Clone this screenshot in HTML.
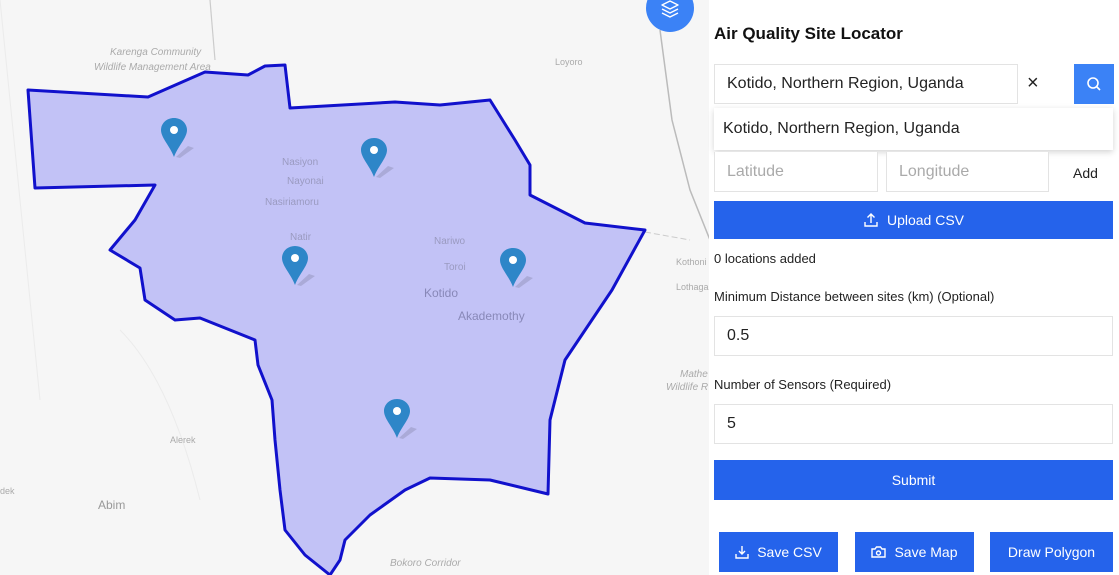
<!DOCTYPE html>
<html><head><style>
*{box-sizing:border-box;margin:0;padding:0}
body{width:1119px;height:575px;overflow:hidden;background:#f6f6f6;font-family:"Liberation Sans",Arial,sans-serif;position:relative}
.map{position:absolute;left:0;top:0;width:1119px;height:575px}
.panel{position:absolute;left:709px;top:0;width:410px;height:575px;background:#fff}
.a{position:absolute}
.inp{position:absolute;border:1px solid #e3e3e3;background:#fff;font-size:16px;color:#222;padding-left:12px;display:flex;align-items:center}
.btn{position:absolute;background:#2563eb;color:#fff;font-size:14px;display:flex;align-items:center;justify-content:center;gap:8px}
.lbl{position:absolute;font-size:14px;color:#222}
</style></head><body>
<svg class="map" viewBox="0 0 1119 575">
<rect width="1119" height="575" fill="#f6f6f6"/>
<path d="M0 0 L40 400 M120 330 Q170 380 200 500" fill="none" stroke="#ebebeb" stroke-width="1"/>
<path d="M660 30 L672 120 L690 190 L710 240" fill="none" stroke="#bbb" stroke-width="1.5"/>
<path d="M645 232 L690 240" fill="none" stroke="#ccc" stroke-width="1" stroke-dasharray="6 3"/>
<path d="M210 0 L215 60" fill="none" stroke="#ccc" stroke-width="1.2"/>
<path d="M28 90 L148 97 L205 72 L248 75 L265 66 L285 65 L290 108 L395 102 L440 105 L490 100 L515 140 L530 165 L530 195 L585 223 L645 230 L612 290 L565 360 L550 420 L548 494 L490 480 L430 478 L405 490 L370 515 L345 540 L340 560 L330 575 L305 555 L285 530 L280 490 L275 440 L272 400 L258 365 L255 340 L200 318 L175 320 L145 300 L140 268 L110 250 L135 220 L155 185 L35 188 Z" fill="#c2c2f6" stroke="#1111cc" stroke-width="3" stroke-linejoin="round"/>
<g font-size="10" fill="#9a9ac0">
<text x="282" y="165">Nasiyon</text><text x="287" y="184">Nayonai</text><text x="265" y="205">Nasiriamoru</text>
<text x="290" y="240">Natir</text><text x="434" y="244">Nariwo</text><text x="444" y="270">Toroi</text>
</g>
<text x="424" y="297" font-size="12" fill="#8888b8">Kotido</text>
<text x="458" y="320" font-size="12" fill="#8888b8">Akademothy</text>
<g font-size="10" fill="#aaa" font-style="italic">
<text x="110" y="55">Karenga Community</text><text x="94" y="70">Wildlife Management Area</text>
<text x="390" y="566">Bokoro Corridor</text><text x="680" y="377">Mathe</text><text x="666" y="390">Wildlife R</text>
</g>
<g font-size="9" fill="#aaa"><text x="555" y="65">Loyoro</text><text x="170" y="443">Alerek</text><text x="676" y="265">Kothoni</text><text x="676" y="290">Lothaga</text><text x="0" y="494">dek</text></g>
<text x="98" y="509" font-size="12" fill="#999">Abim</text>
<defs><g id="pin"><path d="M2 39 L14 28 L20 30 L6 40Z" fill="rgba(0,0,0,.12)"/><path d="M0 0 C-8 0 -13 6 -13 12 C-13 20 -4 28 0 39 C4 28 13 20 13 12 C13 6 8 0 0 0Z" fill="#2e86c8"/><circle cx="0" cy="12" r="4" fill="#fff"/></g></defs>
<use href="#pin" transform="translate(174,118)"/>
<use href="#pin" transform="translate(374,138)"/>
<use href="#pin" transform="translate(295,246)"/>
<use href="#pin" transform="translate(513,248)"/>
<use href="#pin" transform="translate(397,399)"/>
<circle cx="670" cy="8" r="24" fill="#3b82f6"/>
<path d="M670 1 L678 5 L670 9 L662 5Z M662 9 L670 13 L678 9 M662 13 L670 17 L678 13" fill="none" stroke="#fff" stroke-width="1.4" stroke-linejoin="round"/>
</svg>
<div class="panel">
<div class="a" style="left:5px;top:24px;font-size:17px;font-weight:bold;color:#111">Air Quality Site Locator</div>
<div class="inp" style="left:5px;top:64px;width:304px;height:40px">Kotido, Northern Region, Uganda</div>
<div class="a" style="left:318px;top:72px;font-size:20px;color:#222">×</div>
<div class="btn" style="left:365px;top:64px;width:40px;height:40px;background:#3b82f6"><svg width="16" height="16" viewBox="0 0 16 16"><circle cx="7" cy="7" r="5" fill="none" stroke="#fff" stroke-width="1.6"/><path d="M11 11 L14 14" stroke="#fff" stroke-width="1.6"/></svg></div>
<div class="a" style="left:5px;top:108px;width:399px;height:42px;background:#fff;box-shadow:0 2px 6px rgba(0,0,0,.18);font-size:16px;color:#222;padding:12px 0 0 9px">Kotido, Northern Region, Uganda</div>
<div class="inp" style="left:5px;top:152px;width:164px;height:40px;color:#aaa;border-top:none">Latitude</div>
<div class="inp" style="left:177px;top:152px;width:163px;height:40px;color:#aaa;border-top:none">Longitude</div>
<div class="a" style="left:364px;top:165px;font-size:14px;color:#222">Add</div>
<div class="btn" style="left:5px;top:201px;width:399px;height:38px"><svg width="16" height="16" viewBox="0 0 16 16" fill="none" stroke="#fff" stroke-width="1.4"><path d="M8 11V2 M4.5 5.5 L8 2 L11.5 5.5 M2 10v4h12v-4"/></svg> Upload CSV</div>
<div class="lbl" style="left:5px;top:251px;font-size:13px">0 locations added</div>
<div class="lbl" style="left:5px;top:289px;font-size:13px">Minimum Distance between sites (km) (Optional)</div>
<div class="inp" style="left:5px;top:316px;width:399px;height:40px">0.5</div>
<div class="lbl" style="left:5px;top:377px;font-size:13px">Number of Sensors (Required)</div>
<div class="inp" style="left:5px;top:404px;width:399px;height:40px">5</div>
<div class="btn" style="left:5px;top:460px;width:399px;height:40px">Submit</div>
<div class="btn" style="left:10px;top:532px;width:119px;height:40px"><svg width="14" height="14" viewBox="0 0 14 14" fill="none" stroke="#fff" stroke-width="1.4"><path d="M7 1v8 M4 6l3 3 3-3 M1 9v4h12V9"/></svg>Save CSV</div>
<div class="btn" style="left:146px;top:532px;width:119px;height:40px"><svg width="15" height="14" viewBox="0 0 15 14" fill="none" stroke="#fff" stroke-width="1.4"><path d="M1 4h3l1.5-2h4L11 4h3v8H1z"/><circle cx="7.5" cy="8" r="2"/></svg>Save Map</div>
<div class="btn" style="left:281px;top:532px;width:123px;height:40px">Draw Polygon</div>
</div>
</body></html>
